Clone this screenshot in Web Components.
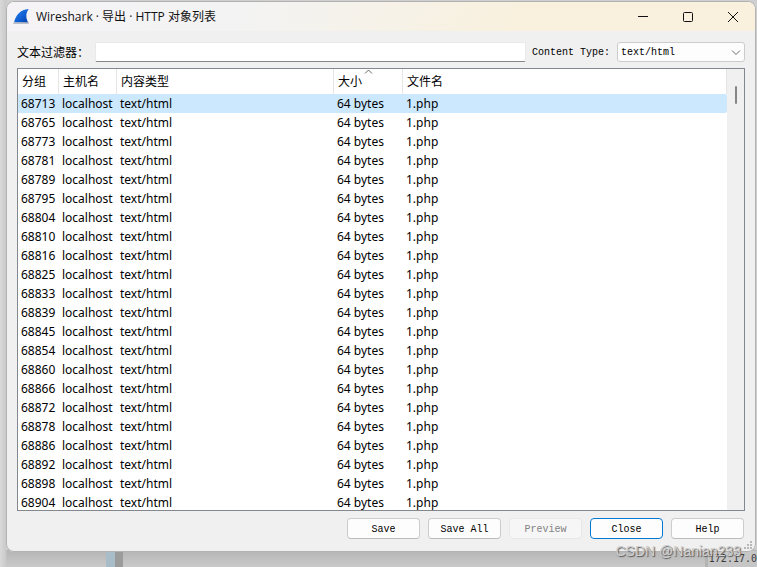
<!DOCTYPE html>
<html lang="zh-CN">
<head>
<meta charset="utf-8">
<title>Wireshark · 导出 · HTTP 对象列表</title>
<style>
body { margin: 0; }
</style>
</head>
<body>
<export-desktop>
  <export-window>
    <title-bar slot="title">Wireshark · 导出 · HTTP 对象列表</title-bar>
    <filter-bar></filter-bar>
    <object-list></object-list>
    <button-row>
      <push-button>Save</push-button>
      <push-button>Save All</push-button>
      <push-button disabled>Preview</push-button>
      <push-button primary>Close</push-button>
      <push-button>Help</push-button>
    </button-row>
  </export-window>
</export-desktop>
<script>
function define(name, html, setup) {
  const template = document.createElement('template');
  template.innerHTML = html;
  customElements.define(name, class extends HTMLElement {
    constructor() {
      super();
      this.attachShadow({ mode: 'open' }).append(template.content.cloneNode(true));
    }
    connectedCallback() {
      if (setup) setup(this, this.shadowRoot);
    }
  });
}

define('export-desktop', `
<style>
  :host { display: flex; position: relative; box-sizing: border-box; height: 100vh; overflow: hidden; padding: 1px 1px 15px 6px;
    background: linear-gradient(90deg, #d9d9d9, #c9c9c9 6px, transparent 7px), linear-gradient(#cfcfcf, #cfcfcf 97%, #b4b4b4 97%, #cacaca);
    font-family: "Noto Sans", "Noto Sans CJK SC", sans-serif; }
  .stripe { position: absolute; left: 106px; bottom: 0; width: 9px; height: 20px; background: #a9bdc9; border-right: 8px solid #9b9b9b; }
  .mark, .ip { position: absolute; white-space: nowrap; }
  .ip { right: 0; bottom: 0; box-sizing: border-box; padding-left: 1px; border-left: 3px solid #b3b3b3; background: #c6c6c6; color: #3c3c3c; font: 10px/16px "DejaVu Sans Mono", monospace; }
  .mark { right: 16px; bottom: 6px; font: 14px/20px "Liberation Sans", Arial, sans-serif; color: #d0d0d0; text-shadow: 1px 1px 1px #555; }
  slot { display: contents; }
</style>
<div class="stripe"></div>
<div class="ip">172.17.0</div>
<slot></slot>
<div class="mark">CSDN @Nanian233</div>`);

define('export-window', `
<style>
  :host { display: flex; flex-direction: column; flex: 1; min-width: 0; position: relative; box-sizing: border-box;
    background: #f0f0f0; border-radius: 8px; overflow: hidden; box-shadow: inset 0 0 0 1px #b2b2b2; }
  main { display: flex; flex-direction: column; flex: 1; min-height: 0; padding: 11px 11px 13px; }
  svg { position: absolute; right: 3px; bottom: 2px; fill: #b8b8b8; }
</style>
<slot name="title"></slot>
<main><slot></slot></main>
<svg width="9" height="9" viewBox="0 0 9 9"><path d="M6 0h2v2H6zM6 3h2v2H6zM6 6h2v2H6zM3 3h2v2H3zM3 6h2v2H3zM0 6h2v2H0z"/></svg>`);

define('title-bar', `
<style>
  :host { display: flex; align-items: center; height: 29px; margin: 1px 1px 0; padding-left: 6px;
    background: linear-gradient(115deg, #f5f3f6 0%, #f3f3f3 32%, #f9f1de 68%); color: #111; border-radius: 7px 7px 0 0; }
  .name { flex: 1; margin-left: 6px; font-size: 12px; line-height: 18px; font-family: "Open Sans", "Noto Sans CJK SC", sans-serif; }
  button { display: grid; place-items: center; width: 45px; height: 29px; padding: 0; border: 0; background: none; }
  nav { display: flex; }
  nav svg { fill: none; stroke: #111; stroke-width: 1; }
</style>
<svg width="17" height="17" viewBox="0 0 17 17"><defs><linearGradient id="fin" x1="0" y1="0" x2="1" y2="1"><stop offset="0" stop-color="#2b86ef"/><stop offset=".6" stop-color="#0d5bd0"/><stop offset="1" stop-color="#0a3f9d"/></linearGradient></defs><path d="M1 14.500C3 7 7 1.500 15.800 1C12.600 5 12.600 10 15.500 15Z" fill="url(#fin)"/><path d="M.5 14.200H15.200L16 16H.300Z" fill="#b9bdc6"/></svg>
<span class="name"><slot></slot></span>
<nav>
  <button aria-label="Minimize"><svg width="12" height="12"><path d="M1 5.500H11"/></svg></button>
  <button aria-label="Maximize"><svg width="12" height="12"><rect x="1.500" y="1.500" width="9" height="9" rx="1"/></svg></button>
  <button aria-label="Close"><svg width="12" height="12"><path d="M1 1L11 11M11 1L1 11"/></svg></button>
</nav>`);

define('filter-bar', `
<style>
  :host { display: flex; align-items: center; height: 20px; margin-bottom: 6px; color: #000;
    font: 10px/22px "Liberation Mono", "Noto Sans CJK SC", monospace; }
  label { padding-top: 2px; }
  .text { padding: 0; font-family: "Noto Sans CJK SC", sans-serif; font-size: 12px; width: 78px; white-space: nowrap; }
  input { flex: 1; min-width: 0; height: 20px; box-sizing: border-box; border: 1px solid #e9e9e9; border-bottom-color: #868686; border-radius: 2px; background: #fff; margin: 0 6px 0 0; outline: 0; }
  .box { position: relative; display: flex; margin-left: 7px; }
  select { appearance: none; width: 128px; height: 20px; box-sizing: border-box; padding: 1px 20px 0 3px; border: 1px solid #ccc; border-radius: 3px; background: #fdfdfd; color: #000; font: inherit; line-height: 18px; }
  svg { position: absolute; right: 4px; top: 7px; fill: none; stroke: #6b6b6b; pointer-events: none; }
</style>
<label class="text" for="filter">文本过滤器：</label>
<input id="filter" type="text">
<label for="type">Content Type:</label>
<span class="box"><select id="type"><option>text/html</option></select><svg width="10" height="7"><path d="M1 1.500L5 5.500L9 1.500"/></svg></span>`);

define('object-list', `
<style>
  :host { display: flex; flex: 1; min-height: 0; overflow: hidden; border: 1px solid #828790; background: #fff; margin-bottom: 7px; color: #000; }
  .wrap { flex: 1; min-width: 0; overflow: hidden; }
  table { width: 100%; table-layout: fixed; border-collapse: separate; border-spacing: 0; font-size: 12px; line-height: 18px; }
  .c1 { width: 41px; } .c2 { width: 58px; } .c3 { width: 217px; } .c4 { width: 69px; }
  th { position: relative; height: 25px; box-sizing: border-box; padding: 0 0 0 4px; border-right: 1px solid #e5e5e5; text-align: left; font-weight: 400; white-space: nowrap; }
  th svg { position: absolute; left: 50%; top: 0; margin-left: -4px; fill: none; stroke: #666; }
  td { height: 19px; box-sizing: border-box; padding: 0 0 0 3px; white-space: nowrap; }
  tr.on td { background: #cce8ff; }
  tr.on td:last-child { border-radius: 0 2px 2px 0; }
  .bar { width: 17px; background: #f0f0f0; }
  .bar div { width: 2px; height: 18px; margin: 17px 0 0 8px; background: #868686; border-radius: 1px; }
</style>
<div class="wrap"><table>
  <colgroup><col class="c1"><col class="c2"><col class="c3"><col class="c4"><col></colgroup>
  <thead><tr><th>分组</th><th>主机名</th><th>内容类型</th><th aria-sort="ascending">大小<svg width="9" height="5"><path d="M1 4.500L4.500 1L8 4.500"/></svg></th><th>文件名</th></tr></thead>
  <tbody></tbody>
</table></div>
<div class="bar"><div></div></div>`, (host, root) => {
  const packets = [68713, 68765, 68773, 68781, 68789, 68795, 68804, 68810, 68816, 68825, 68833,
    68839, 68845, 68854, 68860, 68866, 68872, 68878, 68886, 68892, 68898, 68904];
  root.querySelector('tbody').innerHTML = packets.map((n, i) =>
    `<tr${i ? '' : ' class="on"'}><td>${n}</td><td>localhost</td><td>text/html</td><td>64 bytes</td><td>1.php</td></tr>`).join('');
});

define('button-row', `
<style>:host { display: flex; justify-content: flex-end; gap: 8px; padding-right: 1px; }</style>
<slot></slot>`);

define('push-button', `
<style>
  :host { display: block; width: 73px; }
  button { display: block; width: 100%; height: 21px; box-sizing: border-box; padding: 2px 0 0; border: 1px solid #ccc; border-bottom-color: #bbb; border-radius: 4px; background: #fdfdfd; color: #000; font: 10px/18px "Liberation Mono", monospace; }
  :host([disabled]) button { border-color: #e8e8e8; background: #f6f6f6; color: #838383; }
  :host([primary]) button { border-color: #0078d4; }
</style>
<button type="button"><slot></slot></button>`, (host, root) => {
  root.querySelector('button').disabled = host.hasAttribute('disabled');
});
</script>
</body>
</html>
